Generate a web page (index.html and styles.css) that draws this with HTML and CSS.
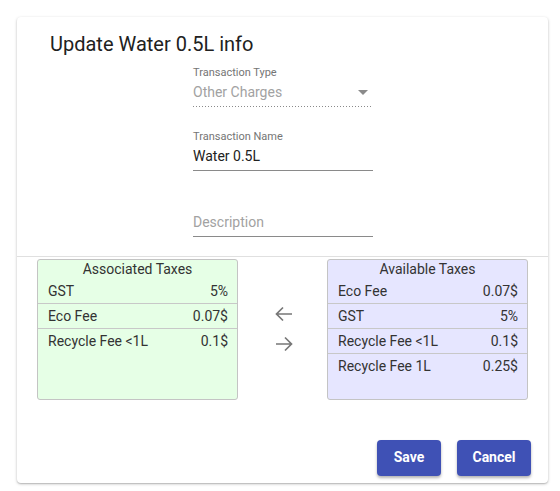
FILE: index.html
```html
<!DOCTYPE html>
<html>
<head>
<meta charset="utf-8">
<link rel="stylesheet" href="styles.css">
</head>
<body>
<div class="card">
  <h1 class="title">Update Water 0.5L info</h1>
  <div class="form">
    <div class="field">
      <div class="label">Transaction Type</div>
      <div class="value select muted">Other Charges<span class="caret"></span></div>
    </div>
    <div class="field">
      <div class="label">Transaction Name</div>
      <div class="value solid">Water 0.5L</div>
    </div>
    <div class="field field-desc">
      <div class="label"></div>
      <div class="value solid muted">Description</div>
    </div>
  </div>
  <div class="divider"></div>
  <div class="taxes">
    <div class="box box-assoc">
      <div class="box-head">Associated Taxes</div>
      <div class="row"><span>GST</span><span>5%</span></div>
      <div class="row"><span>Eco Fee</span><span>0.07$</span></div>
      <div class="row"><span>Recycle Fee &lt;1L</span><span>0.1$</span></div>
    </div>
    <div class="arrows">
      <svg class="arrow" viewBox="0 0 24 24"><path d="M20 12H5M11 5.5L4.5 12L11 18.5"/></svg>
      <svg class="arrow" viewBox="0 0 24 24"><path d="M4 12H19M13 5.5L19.5 12L13 18.5"/></svg>
    </div>
    <div class="box box-avail">
      <div class="box-head">Available Taxes</div>
      <div class="row"><span>Eco Fee</span><span>0.07$</span></div>
      <div class="row"><span>GST</span><span>5%</span></div>
      <div class="row"><span>Recycle Fee &lt;1L</span><span>0.1$</span></div>
      <div class="row"><span>Recycle Fee 1L</span><span>0.25$</span></div>
    </div>
  </div>
  <div class="actions">
    <button class="btn btn-save">Save</button>
    <button class="btn btn-cancel">Cancel</button>
  </div>
</div>
</body>
</html>
```
FILE: styles.css
```css
html, body {
  margin: 0;
  padding: 0;
  background: #ffffff;
}
body {
  padding: 17px;
  font-family: Roboto, "Liberation Sans", sans-serif;
  color: #212121;
}
.card {
  width: 531px;
  box-sizing: border-box;
  background: #fff;
  border-radius: 4px;
  box-shadow: 0 1px 3px rgba(0,0,0,0.25), 0 1px 1px rgba(0,0,0,0.1);
  padding: 15px 0 7px 0;
}
.title {
  margin: 0 0 0 33px;
  font-size: 20px;
  line-height: 24px;
  font-weight: 400;
  color: #212121;
}
.form {
  margin: 10px 0 0 176px;
  width: 180px;
}
.field {
  margin-top: 23px;
}
.field:first-child {
  margin-top: 0;
}
.field-desc {
  margin-top: 25px;
}
.label {
  font-size: 11px;
  line-height: 14px;
  height: 14px;
  color: #757575;
  margin-bottom: 2px;
}
.value {
  position: relative;
  font-size: 14px;
  line-height: 20px;
  height: 20px;
  padding-bottom: 4px;
  color: #212121;
}
.muted {
  color: #a2a2a2;
}
.solid {
  border-bottom: 1px solid #8a8a8a;
}
.select {
  padding-bottom: 5px;
  background-image: linear-gradient(to right, #8a8a8a 1px, transparent 1px);
  background-size: 3px 1px;
  background-repeat: repeat-x;
  background-position: left bottom;
}
.caret {
  position: absolute;
  right: 5px;
  top: 8px;
  width: 0;
  height: 0;
  border-left: 5px solid transparent;
  border-right: 5px solid transparent;
  border-top: 5px solid #8a8a8a;
}
.divider {
  margin-top: 19px;
  height: 1px;
  background: #e0e0e0;
}
.taxes {
  margin-top: 2px;
  padding: 0 20px;
  display: flex;
  justify-content: space-between;
  align-items: flex-start;
}
.box {
  width: 201px;
  height: 141px;
  box-sizing: border-box;
  border: 1px solid #c4c4c4;
  border-radius: 3px;
  font-size: 14px;
  color: #333;
}
.box-assoc {
  background: #e6ffe6;
}
.box-avail {
  background: #e6e6ff;
}
.box-head {
  text-align: center;
  line-height: 19px;
  height: 19px;
}
.row {
  display: flex;
  justify-content: space-between;
  padding: 0 9px 0 10px;
  height: 24px;
  line-height: 24px;
}
.row + .row {
  border-top: 1px solid #c8c8c8;
}
.arrows {
  display: flex;
  flex-direction: column;
  align-items: center;
  gap: 6px;
  padding-top: 43px;
  padding-left: 2px;
}
.arrow {
  width: 24px;
  height: 24px;
  fill: none;
  stroke: #777;
  stroke-width: 1.7;
}
.actions {
  margin-top: 40px;
  padding-right: 17px;
  display: flex;
  justify-content: flex-end;
  gap: 16px;
}
.btn {
  height: 36px;
  border: none;
  border-radius: 4px;
  background: #3f51b5;
  color: #fff;
  font-family: Roboto, "Liberation Sans", sans-serif;
  font-size: 14px;
  font-weight: 700;
  box-shadow: 0 2px 3px rgba(0,0,0,0.3);
  padding: 0 0 2px 0;
}
.btn-save {
  width: 64px;
}
.btn-cancel {
  width: 74px;
}
```
